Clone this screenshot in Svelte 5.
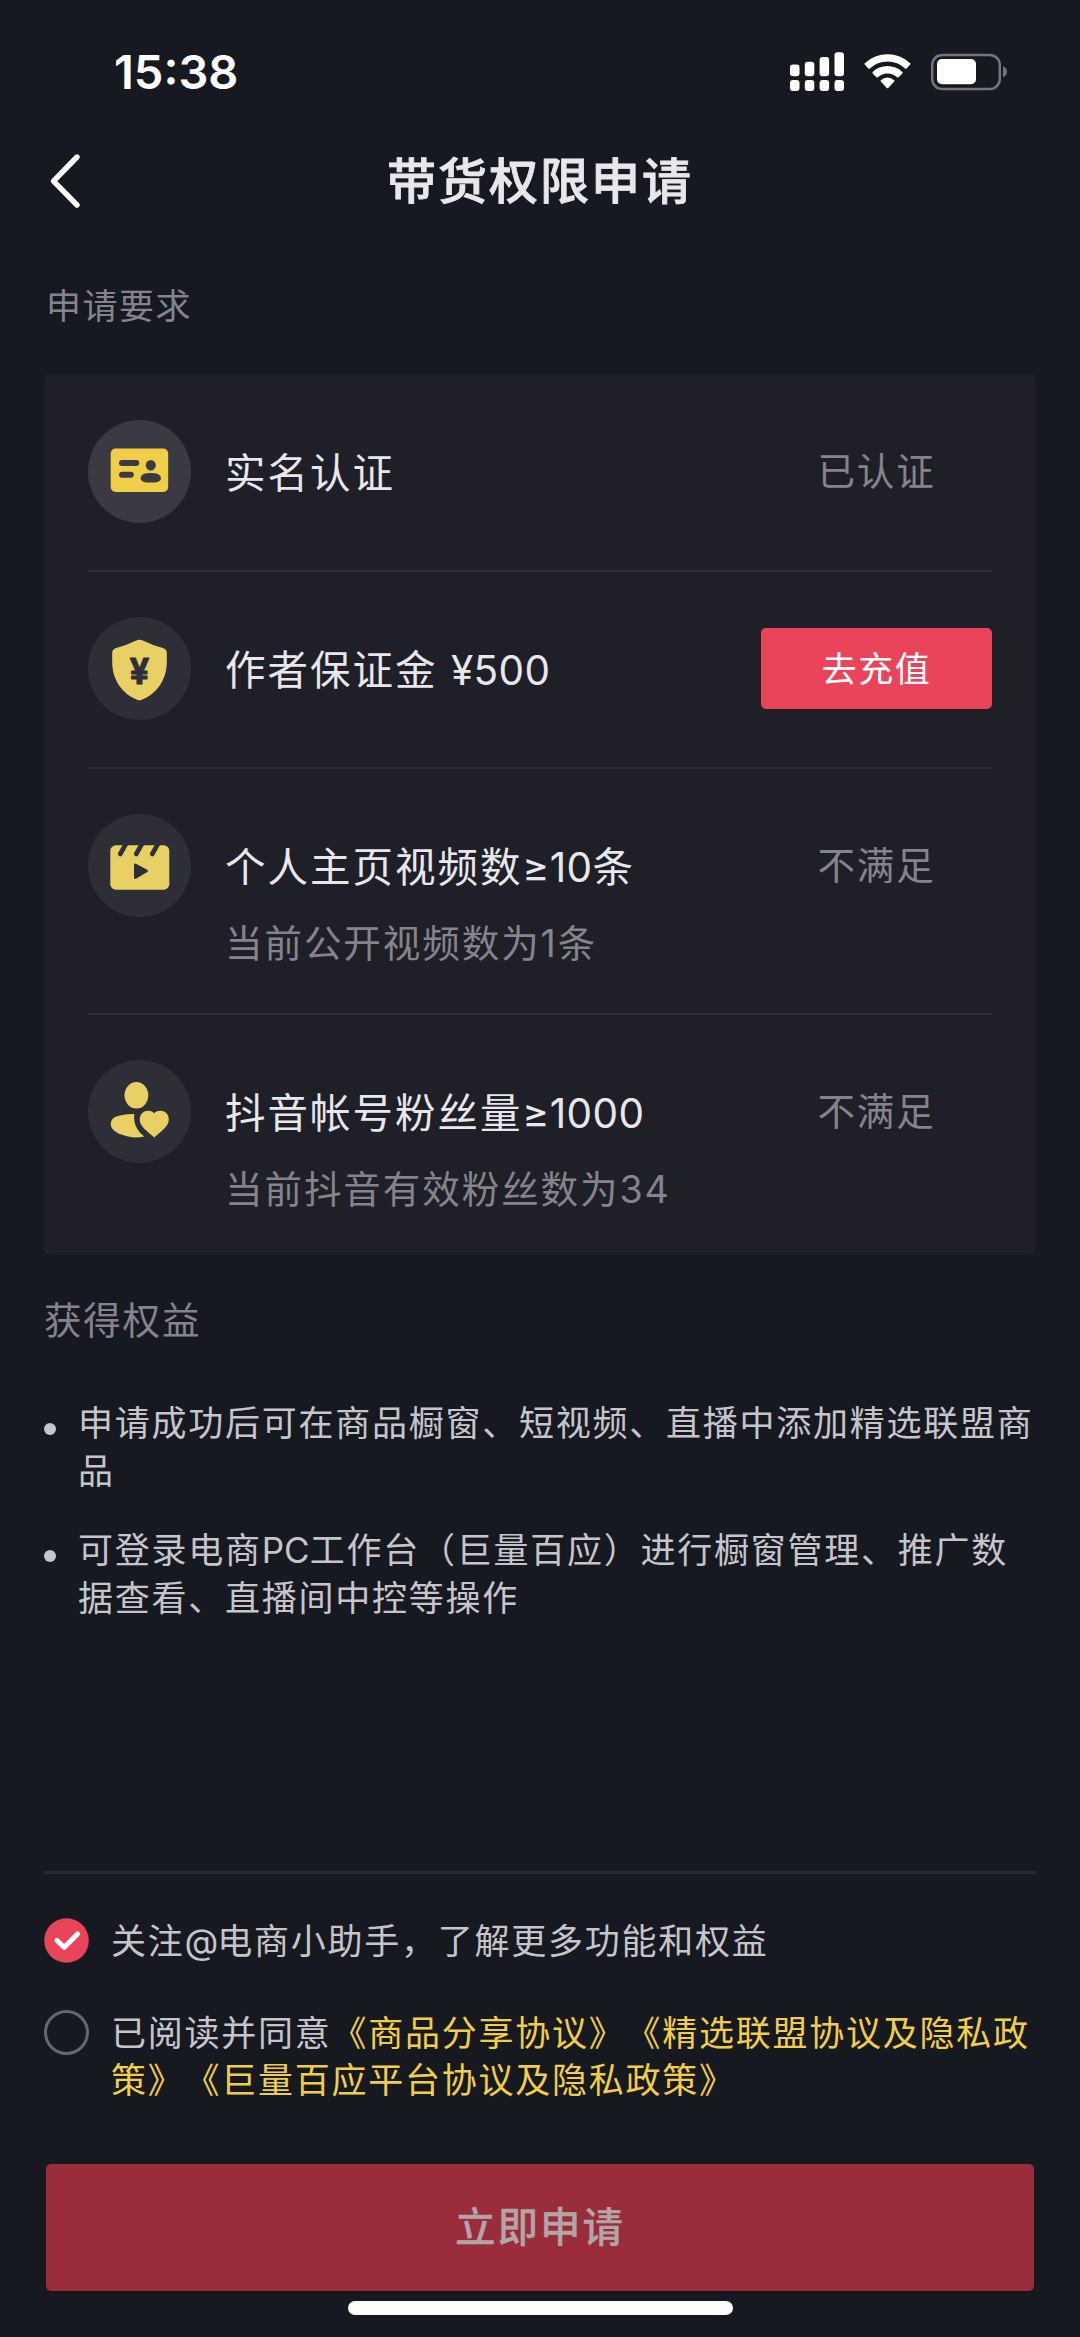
<script lang="ts">
	type Requirement = {
		icon: 'idcard' | 'deposit' | 'video' | 'fans';
		label: string;
		hint?: string;
		status?: string;
		action?: string;
		done?: boolean;
	};

	const requirements: Requirement[] = [
		{ icon: 'idcard', label: '实名认证', status: '已认证', done: true },
		{ icon: 'deposit', label: '作者保证金 ¥500', action: '去充值' },
		{ icon: 'video', label: '个人主页视频数≥10条', hint: '当前公开视频数为1条', status: '不满足' },
		{ icon: 'fans', label: '抖音帐号粉丝量≥1000', hint: '当前抖音有效粉丝数为34', status: '不满足' },
	];

	const benefits = [
		'申请成功后可在商品橱窗、短视频、直播中添加精选联盟商品',
		'可登录电商PC工作台（巨量百应）进行橱窗管理、推广数据查看、直播间中控等操作',
	];

	const agreements = ['《商品分享协议》', '《精选联盟协议及隐私政策》', '《巨量百应平台协议及隐私政策》'];

	let follow = $state(true);
	let agreed = $state(false);

	// odd parts are the latin runs, they get tighter tracking
	function split(text: string) {
		return text.split(/([!-~≥¥]+)/);
	}
</script>

{#snippet mixed(text: string)}
	{#each split(text) as part, i}{#if i % 2}<span class="latin">{part}</span>{:else}{part}{/if}{/each}
{/snippet}

{#snippet check(on: boolean)}
	<svg class="check" viewBox="0 0 45 45">
		{#if on}
			<circle cx="22.5" cy="22.5" r="22.3" fill="#ea445a" />
			<path d="M13 22.5l7.3 6.8L33.5 16" fill="none" stroke="#fff" stroke-width="5" stroke-linecap="round" stroke-linejoin="round" />
		{:else}
			<circle cx="22.5" cy="22.5" r="21" fill="none" stroke="#66666f" stroke-width="3" />
		{/if}
	</svg>
{/snippet}

<div class="page">
	<div class="statusbar">
		<span class="time">15:38</span>
		<svg width="218" height="42" viewBox="790 51 218 42">
			<g fill="#fff">
				<rect x="790" y="64.5" width="9.5" height="11.8" rx="3" />
				<rect x="804.8" y="61.7" width="9.5" height="14.6" rx="3" />
				<rect x="819.6" y="57" width="9.5" height="19.3" rx="3" />
				<rect x="834.5" y="52.3" width="9.5" height="24" rx="3" />
				<rect x="790" y="80" width="9.5" height="11" rx="3" />
				<rect x="804.8" y="80" width="9.5" height="11" rx="3" />
				<rect x="819.6" y="80" width="9.5" height="11" rx="3" />
				<rect x="834.5" y="80" width="9.5" height="11" rx="3" />
				<path d="M864.8 63.2a1 1 0 0 0 0 1.4l3.6 3.8a1 1 0 0 0 1.4 0a26 26 0 0 1 35.4 0a1 1 0 0 0 1.4 0l3.6-3.8a1 1 0 0 0 0-1.4a33 33 0 0 0-45.4 0z" />
				<path d="M872.7 72a1 1 0 0 0 0 1.4l3.7 3.8a1 1 0 0 0 1.4 0a14.3 14.3 0 0 1 19.4 0a1 1 0 0 0 1.4 0l3.7-3.8a1 1 0 0 0 0-1.4a21.4 21.4 0 0 0-29.6 0z" />
				<path d="M880.8 81.6a1 1 0 0 1 0-1.4a9.8 9.8 0 0 1 13.4 0a1 1 0 0 1 0 1.4l-6 6.4a1 1 0 0 1-1.4 0z" />
				<rect x="937" y="59" width="39" height="25.2" rx="5" />
			</g>
			<rect x="932.2" y="54.9" width="67.6" height="34.2" rx="10" fill="none" stroke="#74747d" stroke-width="2.5" />
			<path d="M1003 66.2q4 1.8 4 5.5t-4 5.5z" fill="#74747d" />
		</svg>
	</div>

	<header class="nav">
		<svg class="back" width="32" height="56" viewBox="0 0 32 56" fill="none">
			<path d="M28 4L4.5 28.2L28 52" stroke="#fff" stroke-width="5.4" stroke-linecap="round" stroke-linejoin="round" />
		</svg>
		<h1>带货权限申请</h1>
	</header>

	<h2 class="section small">申请要求</h2>

	<section class="card">
		{#each requirements as item}
			<div class="req">
				<svg class="icon" viewBox="0 0 103 103">
					<circle cx="51.5" cy="51.5" r="51.5" fill={item.done ? '#3b3a44' : '#2e2e37'} />
					{#if item.icon === 'idcard'}
						<rect x="22.7" y="28.5" width="57.5" height="43.5" rx="5" fill="#f0ce48" />
						<g fill="#3b3a44">
							<rect x="31" y="40" width="20.3" height="6" rx="3" />
							<rect x="31" y="51.7" width="14.8" height="6" rx="3" />
							<ellipse cx="62.8" cy="45.3" rx="5" ry="5.3" />
							<path d="M52.6 58.4q0-5.3 10.2-5.3t10.2 5.3q0 4.2-10.2 4.2t-10.2-4.2z" />
						</g>
					{:else if item.icon === 'deposit'}
						<path d="M48.3 23.5Q51.5 22 54.7 23.5Q64 28 75.5 31.3Q78.8 32.5 78.8 36V45C78.8 63 68.5 77 53.8 82.8Q51.5 83.8 49.2 82.8C34.5 77 24.2 63 24.2 45V36Q24.2 32.5 27.5 31.3Q39 28 48.3 23.5Z" fill="#e8d065" />
						<text class="yen" x="51.5" y="67" text-anchor="middle">¥</text>
					{:else if item.icon === 'video'}
						<rect x="22.3" y="31.3" width="59" height="44.4" rx="5.5" fill="#e8d065" />
						<g stroke="#2e2e37" stroke-linecap="round" stroke-linejoin="round">
							<path d="M38.2 29.5L32.2 40M54.2 29.5L48.2 40M70.2 29.5L64.2 40" stroke-width="4.6" />
							<path d="M47.3 50.8L58.6 57L47.3 63.6Z" fill="#2e2e37" stroke-width="2.6" />
						</g>
					{:else}
						<g fill="#e8d065">
							<ellipse cx="48.4" cy="35.3" rx="11.9" ry="13.2" />
							<path d="M22.7 64Q23 56.7 32 55.4Q39 54 46.3 54Q44.5 67.5 56.3 76.5Q50 77.8 44 77.3Q22.7 73.5 22.7 64Z" />
							<path d="M66.2 77.5C58.5 70.5 51.7 66.2 51.7 59.5C51.7 51.2 61 48.3 66.2 53.2C71.4 48.3 80.8 51.2 80.8 59.5C80.8 66.2 74 70.5 66.2 77.5Z" />
						</g>
					{/if}
				</svg>
				<div class="body">
					<div class="label">{@render mixed(item.label)}</div>
					{#if item.hint}
						<div class="hint">{item.hint}</div>
					{/if}
				</div>
				<div class="side">
					{#if item.action}
						<button class="charge">{item.action}</button>
					{:else}
						<span class="status">{item.status}</span>
					{/if}
				</div>
			</div>
		{/each}
	</section>

	<h2 class="section benefits-title">获得权益</h2>

	<ul>
		{#each benefits as text}
			<li>{@render mixed(text)}</li>
		{/each}
	</ul>

	<footer>
		<!-- svelte-ignore a11y_click_events_have_key_events a11y_no_static_element_interactions -->
		<div class="option" onclick={() => (follow = !follow)}>
			{@render check(follow)}
			<p>{@render mixed('关注@电商小助手，了解更多功能和权益')}</p>
		</div>
		<!-- svelte-ignore a11y_click_events_have_key_events a11y_no_static_element_interactions -->
		<div class="option" onclick={() => (agreed = !agreed)}>
			{@render check(agreed)}
			<p>已阅读并同意{#each agreements as name}<span class="link">{name}</span>{/each}</p>
		</div>
		<button class="submit" class:disabled={!agreed}>立即申请</button>
		<div class="home"></div>
	</footer>
</div>

<style>
	:global(body) {
		background: #171921;
	}

	.page {
		width: 1080px;
		height: 2337px;
		box-sizing: border-box;
		padding: 0 44px;
		overflow: hidden;
		display: flex;
		flex-direction: column;
		background: #171921;
		color: #e8e7ec;
		font-family: Inter, 'Noto Sans CJK SC', sans-serif;
		text-spacing-trim: space-all;
	}

	h1,
	h2,
	p,
	ul {
		margin: 0;
		padding: 0;
		font-weight: 400;
	}

	button {
		border: none;
		padding: 0;
		font-family: inherit;
	}

	.statusbar {
		height: 144px;
		flex: none;
		display: flex;
		align-items: center;
		justify-content: space-between;
		padding: 0 28px 0 70px;
	}

	.time {
		color: #fff;
		font-size: 47px;
		font-weight: 600;
		line-height: 60px;
	}

	.nav {
		height: 74px;
		flex: none;
		display: flex;
		align-items: center;
		padding: 0 5px;
	}

	.back {
		width: 32px;
	}

	.nav h1 {
		flex: 1;
		margin-right: 32px;
		padding-top: 2px;
		text-align: center;
		font-size: 49px;
		font-weight: 500;
		line-height: 74px;
		letter-spacing: 2px;
		-webkit-text-stroke: 0.8px;
	}

	.section {
		color: #85848c;
		font-size: 37.5px;
		line-height: 56px;
		letter-spacing: 1.8px;
	}

	.section.small {
		margin: 60px 0 40px 2px;
		font-size: 35px;
		letter-spacing: 1.5px;
	}

	.card {
		height: 881px;
		box-sizing: border-box;
		flex: none;
		padding: 0 44px;
		border-radius: 6px;
		background: #1f1f28;
	}

	.req {
		display: flex;
		padding: 46px 0;
	}

	.req + .req {
		padding-top: 45px;
		border-top: 2px solid #2e2e37;
	}

	.icon {
		width: 103px;
		height: 103px;
		flex: none;
	}

	.yen {
		fill: #2e2e37;
		stroke: #2e2e37;
		stroke-width: 0.8;
		stroke-linejoin: round;
		font-size: 35px;
		font-weight: 700;
	}

	.body {
		flex: 1;
		margin-left: 34px;
	}

	.label {
		padding-top: 2px;
		margin-bottom: -1px;
		font-size: 40.5px;
		line-height: 103px;
		letter-spacing: 2px;
	}

	.latin {
		letter-spacing: 0.4px;
	}

	.hint {
		margin: -3px 0 -5px;
		color: #85848c;
		font-size: 37.5px;
		line-height: 56px;
		letter-spacing: 1.95px;
	}

	.side {
		width: 231px;
		height: 103px;
		display: flex;
		align-items: center;
		justify-content: center;
	}

	.status {
		color: #85848c;
		font-size: 37.5px;
		line-height: 103px;
		letter-spacing: 1.8px;
	}

	.charge {
		width: 231px;
		height: 81px;
		border-radius: 5px;
		background: #ea445a;
		color: #fff;
		font-size: 35px;
		line-height: 78px;
		letter-spacing: 1.7px;
	}

	.benefits-title {
		margin-top: 38px;
	}

	ul {
		margin-top: 51px;
		list-style: none;
	}

	li {
		position: relative;
		margin-bottom: 32px;
		padding-left: 34px;
		color: #c6c5cb;
		font-size: 35px;
		line-height: 47.5px;
		letter-spacing: 1.75px;
	}

	li .latin {
		letter-spacing: 0;
	}

	li::before {
		content: '';
		position: absolute;
		left: 0;
		top: 23px;
		width: 12px;
		height: 12px;
		border-radius: 50%;
		background: #c6c5cb;
	}

	footer {
		margin-top: auto;
		border-top: 3px solid #272831;
		padding: 44px 0 22px;
	}

	.option {
		display: flex;
		align-items: flex-start;
		margin-bottom: 45px;
	}

	.check {
		width: 45px;
		height: 45px;
		flex: none;
	}

	.option p {
		margin-left: 22px;
		color: #c6c5cb;
		font-size: 35px;
		line-height: 47px;
		letter-spacing: 1.75px;
	}

	.option .latin {
		letter-spacing: -1px;
	}

	.option .link {
		color: #f0ce48;
	}

	.submit {
		display: block;
		width: 988px;
		height: 127px;
		margin: 60px 2px 0;
		border-radius: 5px;
		background: #ea445a;
		color: #fff;
		font-size: 40.5px;
		font-weight: 500;
		line-height: 124px;
		letter-spacing: 2px;
		-webkit-text-stroke: 0.3px;
	}

	.submit.disabled {
		background: #9a2c3b;
		color: #b2a5a6;
	}

	.home {
		width: 385px;
		height: 14px;
		margin: 10px auto 0;
		border-radius: 7px;
		background: #fff;
	}
</style>
